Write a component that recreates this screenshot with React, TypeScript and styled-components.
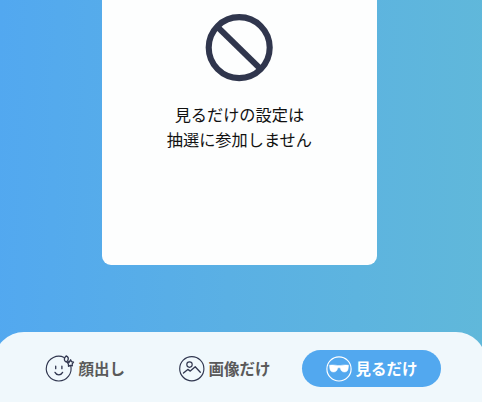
import React from "react";
import styled, { createGlobalStyle } from "styled-components";

const GlobalStyle = createGlobalStyle`
  * { box-sizing: border-box; }
  body { margin: 0; overflow: hidden; }
`;

const Screen = styled.main`
  width: 482px;
  height: 402px;
  overflow: hidden;
  display: flex;
  flex-direction: column;
  justify-content: space-between;
  background: linear-gradient(92deg, #52a8f0 0%, #5ab0e4 48%, #60b8da 100%);
  font-family: "Noto Sans CJK JP", sans-serif;
`;

const Card = styled.section`
  width: 275.2px;
  height: 264.7px;
  margin-left: 101.8px;
  padding-top: 14px;
  display: flex;
  flex-direction: column;
  align-items: center;
  background: #fdfefe;
  border-radius: 0 0 9px 9px;
`;

const ProhibitedIcon = styled.svg`
  width: 68px;
  height: 68px;
  flex: none;
  display: block;
  overflow: visible;
`;

const Message = styled.p`
  margin: 20.4px 0 0;
  font-size: 16.2px;
  line-height: 24.4px;
  color: #111;
  text-align: center;
  white-space: nowrap;
`;

const ModeBar = styled.nav`
  width: 491.5px;
  height: 69.6px;
  margin-left: -6px;
  padding: 18px 50.5px 0 31px;
  display: flex;
  flex: none;
  align-items: flex-start;
  background: #f0f8fc;
  border-radius: 30px 30px 0 0;
`;

const ModeButton = styled.button<{ $active?: boolean; $width: number; $inset: number }>`
  width: ${(p) => p.$width}px;
  height: 36.7px;
  padding: 0 0 0 ${(p) => p.$inset}px;
  flex: none;
  display: flex;
  align-items: center;
  border: 0;
  border-radius: 18.4px;
  background: ${(p) => (p.$active ? "#52a8ef" : "transparent")};
  color: ${(p) => (p.$active ? "#fff" : "#5a5a5a")};
  font: 700 15.5px/24px "Noto Sans CJK JP", sans-serif;
  white-space: nowrap;
`;

const ModeLabel = styled.span`
  margin-bottom: 2px;
`;

const ModeIcon = styled.svg<{ $light?: boolean; $gap?: number }>`
  width: 30px;
  height: 28px;
  margin-right: ${(p) => p.$gap ?? 0}px;
  flex: none;
  overflow: visible;
  color: ${(p) => (p.$light ? "#fff" : "#30364f")};
  fill: none;
  stroke: currentColor;
  stroke-width: 1.15;
  stroke-linecap: round;
  stroke-linejoin: round;
`;

function FaceIcon() {
  return (
    <ModeIcon $gap={2.2} viewBox="0 0 30 28">
      <path d="M18.2 2.5A12.4 12.4 0 1 0 24.7 10.5" />
      <path d="M9.7 11.2v2.5M15.9 11.2v2.5M9 17.4c1.6 3.2 6 3.2 7.6 0" strokeWidth="1.3" />
      <path d="M20.2 .9c1.7.9 2.5 2.8 1.6 4.5l-1.4 1.8c-1.8-.9-2.6-2.8-1.6-4.5z" strokeWidth="1.3" />
      <path d="M24.6 4.8l.9 1.8 2 .6-1.3 1.7.1 2-1.9-.5-1.9.9-.1-2.2-1-1.6 2-.7z" strokeWidth="1.3" />
      <path d="M22 6.2l1 1.5" />
    </ModeIcon>
  );
}

function ImageIcon() {
  return (
    <ModeIcon viewBox="0 0 30 28">
      <circle cx="12.8" cy="13.7" r="12.1" />
      <circle cx="10.5" cy="9.6" r="2.7" />
      <path d="M4.5 18.1l4.3-3.7 2.5 1.7 4.9-4.3 5.1 5.5" strokeWidth="1.3" />
    </ModeIcon>
  );
}

function GlassesIcon() {
  return (
    <ModeIcon $light viewBox="0 0 30 28">
      <circle cx="13" cy="13.9" r="12.1" />
      <path
        d="M3.4 10.2c2.8-.5 5.5-.4 8.1.3h3c2.6-.7 5.3-.8 8.1-.3l-.2 2.1c-.3 3.4-1.5 4.8-3.9 4.8-2.5 0-3.6-1.4-4.4-4.3h-2.2c-.8 2.9-1.9 4.3-4.4 4.3-2.4 0-3.6-1.4-3.9-4.8z"
        fill="currentColor"
        strokeWidth="0.4"
      />
    </ModeIcon>
  );
}

export default function App() {
  return (
    <Screen>
      <GlobalStyle />
      <Card>
        <ProhibitedIcon viewBox="0 0 68 68" fill="none" stroke="#30364d" strokeWidth="6.1">
          <circle cx="34.2" cy="33.6" r="30.5" />
          <path d="M12.7 13.1l43 42" />
        </ProhibitedIcon>
        <Message>
          見るだけの設定は
          <br />
          抽選に参加しません
        </Message>
      </Card>
      <ModeBar>
        <ModeButton $width={140} $inset={21.2}>
          <FaceIcon />
          <ModeLabel>顔出し</ModeLabel>
        </ModeButton>
        <ModeButton $width={137} $inset={13.5}>
          <ImageIcon />
          <ModeLabel>画像だけ</ModeLabel>
        </ModeButton>
        <ModeButton $active $width={139.3} $inset={23.5}>
          <GlassesIcon />
          <ModeLabel>見るだけ</ModeLabel>
        </ModeButton>
      </ModeBar>
    </Screen>
  );
}
